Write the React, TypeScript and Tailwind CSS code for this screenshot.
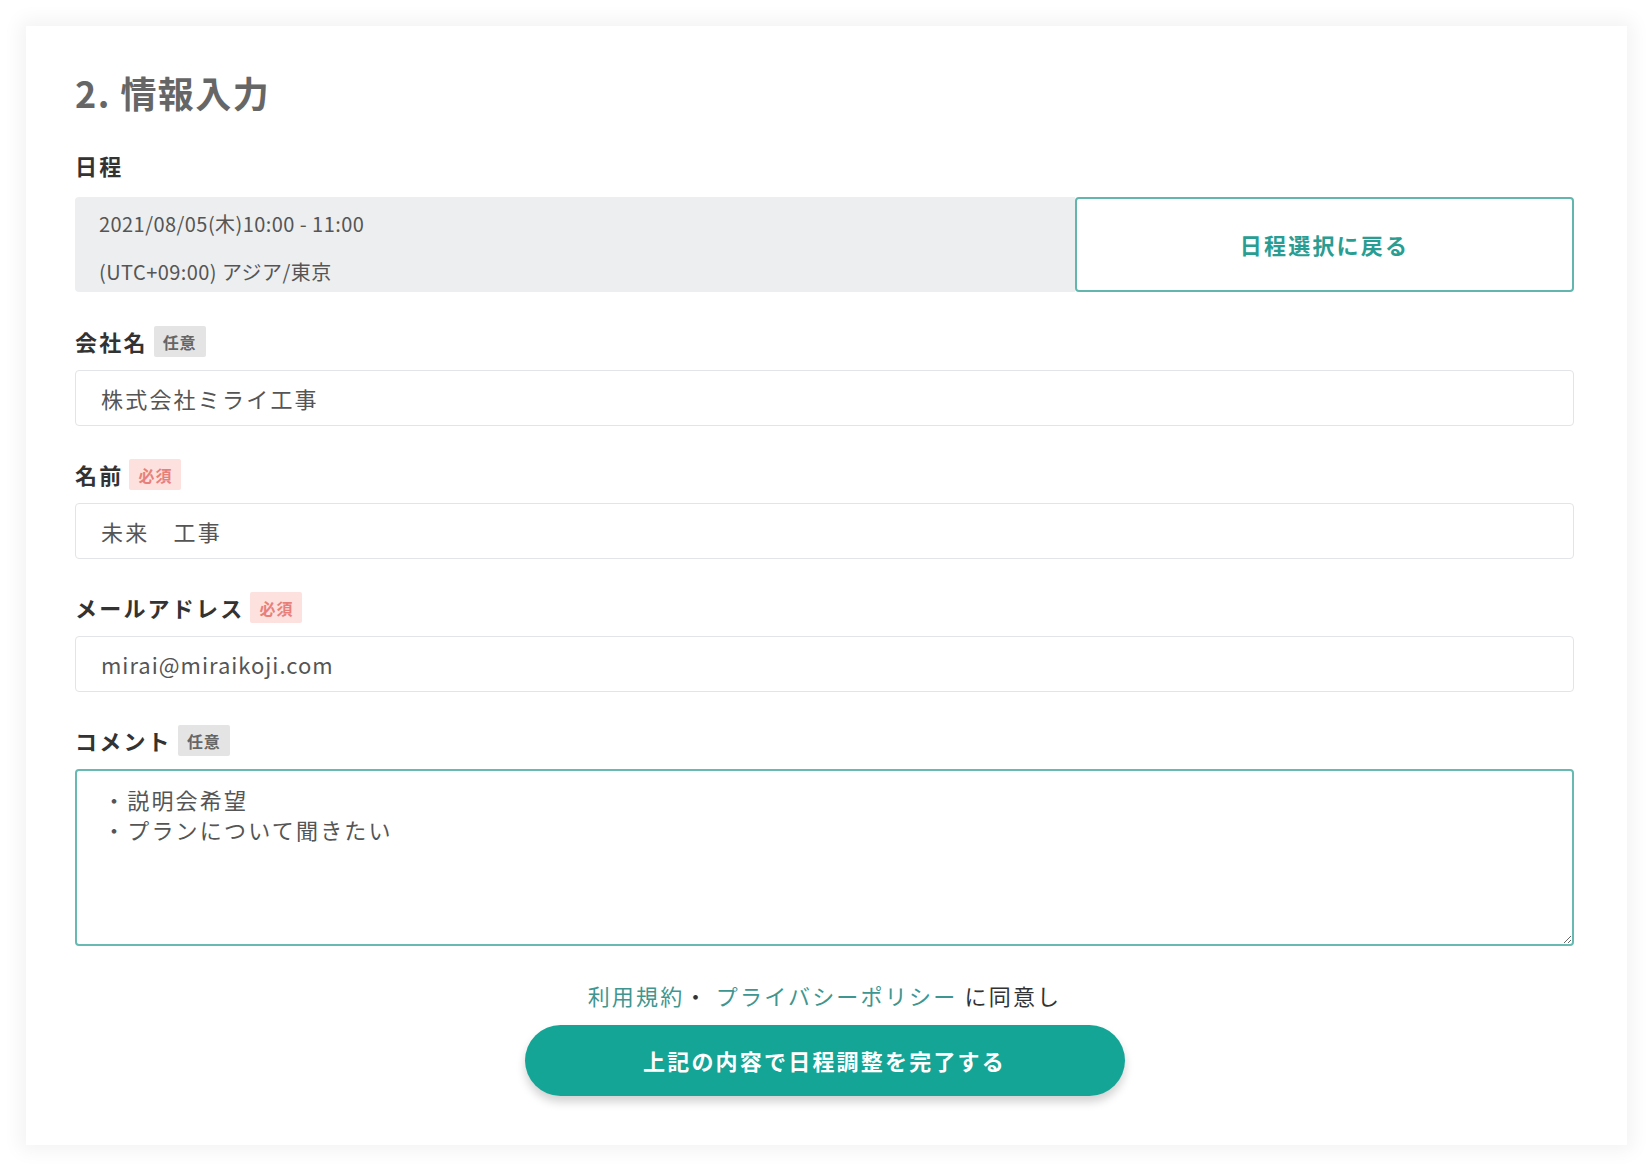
import { ReactNode } from "react";

const FONT = { fontFamily: '"Noto Sans CJK JP", "Noto Sans", sans-serif' };

function Badge({ required }: { required?: boolean }) {
  return required ? (
    <span className="ml-[6px] flex h-[31px] w-[52px] items-center justify-center rounded-[2px] bg-[#fde1df] text-[16px] font-bold tracking-[0.05em] text-[#e8807a]">
      必須
    </span>
  ) : (
    <span className="ml-[6px] flex h-[31px] w-[52px] items-center justify-center rounded-[2px] bg-[#e4e4e4] text-[16px] font-bold tracking-[0.05em] text-[#666]">
      任意
    </span>
  );
}

function Field({
  label,
  required,
  children,
}: {
  label: string;
  required?: boolean;
  children: ReactNode;
}) {
  return (
    <div className="flex flex-col">
      <div className="flex h-[31px] items-center">
        <span className="text-[22px] font-bold leading-[31px] tracking-[0.1em] text-[#333]">{label}</span>
        <Badge required={required} />
      </div>
      <div className="mt-[13px]">{children}</div>
    </div>
  );
}

function TextInput({ value, latin }: { value: string; latin?: boolean }) {
  return (
    <div
      className={
        latin
          ? "flex h-[56px] items-center rounded-[4px] border border-[#e2e4e7] bg-white pl-[25px] text-[22px] tracking-[0.045em] text-[#555]"
          : "flex h-[56px] items-center rounded-[4px] border border-[#e2e4e7] bg-white pl-[25px] text-[22px] tracking-[0.1em] text-[#555]"
      }
    >
      {value}
    </div>
  );
}

export default function App() {
  return (
    <div className="min-h-[1172px] bg-white pt-[26px]" style={FONT}>
      <div className="ml-[26px] w-[1601px] bg-white pb-[49px] pl-[49px] pr-[53px] pt-[39px] shadow-[0_0_18px_6px_rgba(0,0,0,0.05)]">
        <h2 className="text-[36px] font-bold leading-[54px] tracking-[0.04em] text-[#666]">2. 情報入力</h2>

        {/* 日程 */}
        <div className="mt-[30px] text-[22px] font-bold leading-[33px] tracking-[0.1em] text-[#333]">日程</div>
        <div className="mt-[15px] flex h-[95px]">
          <div className="flex flex-1 flex-col gap-[18px] rounded-l-[4px] bg-[#eceef0] pl-[24px] pt-[12px] text-[20px] leading-[30px] tracking-[0.022em] text-[#555]">
            <div>2021/08/05(木)10:00 - 11:00</div>
            <div>(UTC+09:00) アジア/東京</div>
          </div>
          <button className="w-[499px] rounded-[4px] border-2 border-[#62b6ae] bg-white text-[22px] font-bold tracking-[0.1em] text-[#2a9d92]">
            日程選択に戻る
          </button>
        </div>

        <div className="mt-[34px] flex flex-col gap-[33px]">
          <Field label="会社名">
            <TextInput value="株式会社ミライ工事" />
          </Field>
          <Field label="名前" required>
            <TextInput value="未来　工事" />
          </Field>
          <Field label="メールアドレス" required>
            <TextInput value="mirai@miraikoji.com" latin />
          </Field>
          <Field label="コメント">
            <textarea
              readOnly
              defaultValue={"・説明会希望\n・プランについて聞きたい"}
              className="block h-[177px] w-full resize-y rounded-[4px] border-2 border-[#68b9b2] bg-white pl-[26px] pt-[13px] text-[22px] leading-[30px] tracking-[0.1em] text-[#555] outline-none"
              style={FONT}
            />
          </Field>
        </div>

        <div className="mt-[34px] flex flex-col items-center">
          <p className="text-[22px] leading-[30px] tracking-[0.1em] text-[#333]">
            <span className="text-[#3f9690]">利用規約</span>・ <span className="text-[#3f9690]">プライバシーポリシー</span> に同意し
          </p>
          <button className="mt-[15px] h-[71px] w-[600px] rounded-full bg-[#14a596] text-[22px] font-bold tracking-[0.1em] text-white shadow-[0_6px_10px_rgba(0,0,0,0.18)]">
            上記の内容で日程調整を完了する
          </button>
        </div>
      </div>
    </div>
  );
}
